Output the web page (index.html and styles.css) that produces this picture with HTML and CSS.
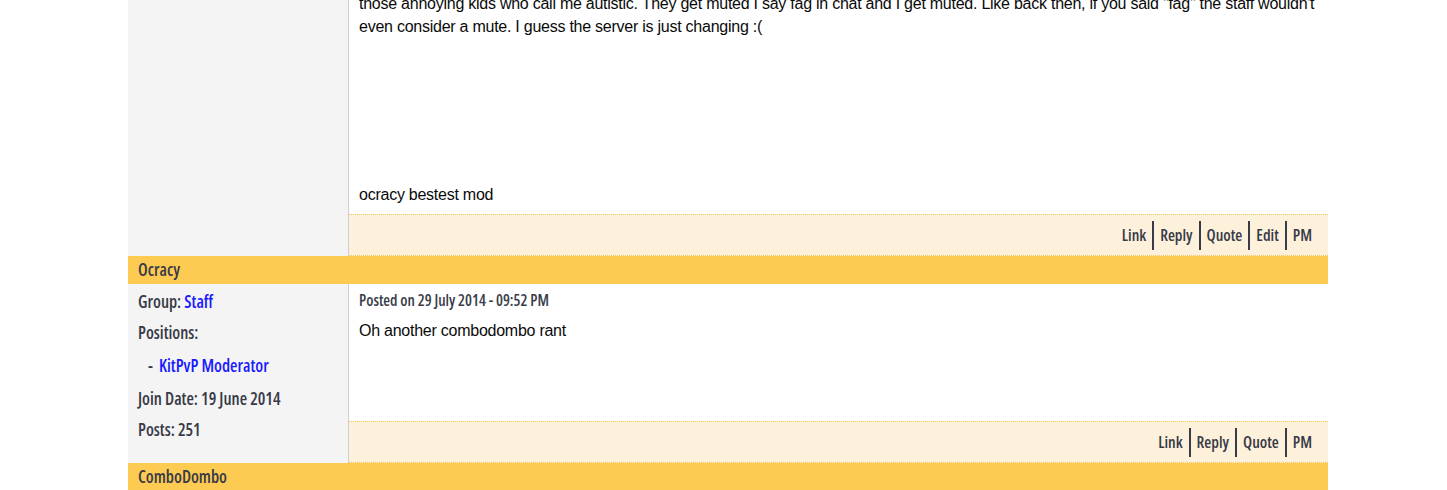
FILE: index.html
```html
<!DOCTYPE html>
<html>
<head>
<meta charset="utf-8">
<link rel="stylesheet" href="styles.css">
</head>
<body>
<div class="wrap">
  <div class="post first">
    <div class="side"></div>
    <div class="main">
      <div class="body">
        <p class="text">those annoying kids who call me autistic. They get muted I say fag in chat and I get muted. Like back then, if you said "fag" the staff wouldn't even consider a mute. I guess the server is just changing :(</p>
        <p class="sig">ocracy bestest mod</p>
      </div>
      <div class="actions">
        <a>Link</a><a>Reply</a><a>Quote</a><a>Edit</a><a>PM</a>
      </div>
    </div>
  </div>
  <div class="author">Ocracy</div>
  <div class="post">
    <div class="side">
      <div class="info">Group: <a class="blue">Staff</a></div>
      <div class="info">Positions:</div>
      <div class="info pos"><span class="dash">-</span><a class="blue">KitPvP Moderator</a></div>
      <div class="info">Join Date: 19 June 2014</div>
      <div class="info">Posts: 251</div>
    </div>
    <div class="main">
      <div class="body body2">
        <div class="date">Posted on 29 July 2014 - 09:52 PM</div>
        <p class="text">Oh another combodombo rant</p>
      </div>
      <div class="actions">
        <a>Link</a><a>Reply</a><a>Quote</a><a>PM</a>
      </div>
    </div>
  </div>
  <div class="author">ComboDombo</div>
</div>
</body>
</html>
```
FILE: styles.css
```css
html, body {
  margin: 0;
  padding: 0;
  background: #fff;
  overflow: hidden;
}
.wrap {
  width: 1200px;
  margin-left: 128px;
}
.post {
  display: flex;
}
.post.first {
  margin-top: -16px;
}
.side,
.date,
.actions a,
.author {
  font-family: "Open Sans", "DejaVu Sans Condensed", sans-serif;
  font-stretch: 75%;
  font-weight: 600;
}
.side {
  width: 221px;
  flex: none;
  box-sizing: border-box;
  background: #f4f4f4;
  border-right: 1px solid #cfcfcf;
  padding: 2px 10px 0 10px;
  font-size: 17px;
  color: #373a47;
}
.info {
  line-height: 31px;
  white-space: nowrap;
}
.info.pos {
  padding: 2px 0 2px 10px;
}
.dash {
  margin-right: 6px;
}
.blue {
  color: #1a1aff;
}
.main {
  flex: 1;
  display: flex;
  flex-direction: column;
}
.body {
  padding: 0 4px 0 10px;
  font-family: "Liberation Sans", Arial, sans-serif;
  font-size: 16px;
  letter-spacing: -0.25px;
  line-height: 23px;
  color: #0a0a0a;
}
.text {
  margin: 0;
}
.first .text {
  padding-top: 8px;
}
.sig {
  margin: 145px 0 8px 0;
}
.body2 {
  height: 137px;
  box-sizing: border-box;
  padding-top: 6px;
}
.date {
  font-size: 15.5px;
  line-height: 20px;
  letter-spacing: 0;
  color: #3a3d4a;
  margin-bottom: 9px;
}
.actions {
  height: 40px;
  background: #fdf1dc;
  border-top: 1px dotted #f0c65a;
  border-bottom: 1px dotted #f0c65a;
  display: flex;
  justify-content: flex-end;
  align-items: center;
  padding-right: 16px;
}
.actions a {
  font-size: 16px;
  color: #373a47;
  line-height: 29px;
  padding: 0 6px;
  border-left: 2px solid #373a47;
}
.actions a:first-child {
  border-left: none;
}
.actions a:last-child {
  padding-right: 0;
}
.author {
  height: 28px;
  line-height: 28px;
  background: #fecb52;
  padding-left: 10px;
  font-size: 17px;
  color: #373a47;
}
```
